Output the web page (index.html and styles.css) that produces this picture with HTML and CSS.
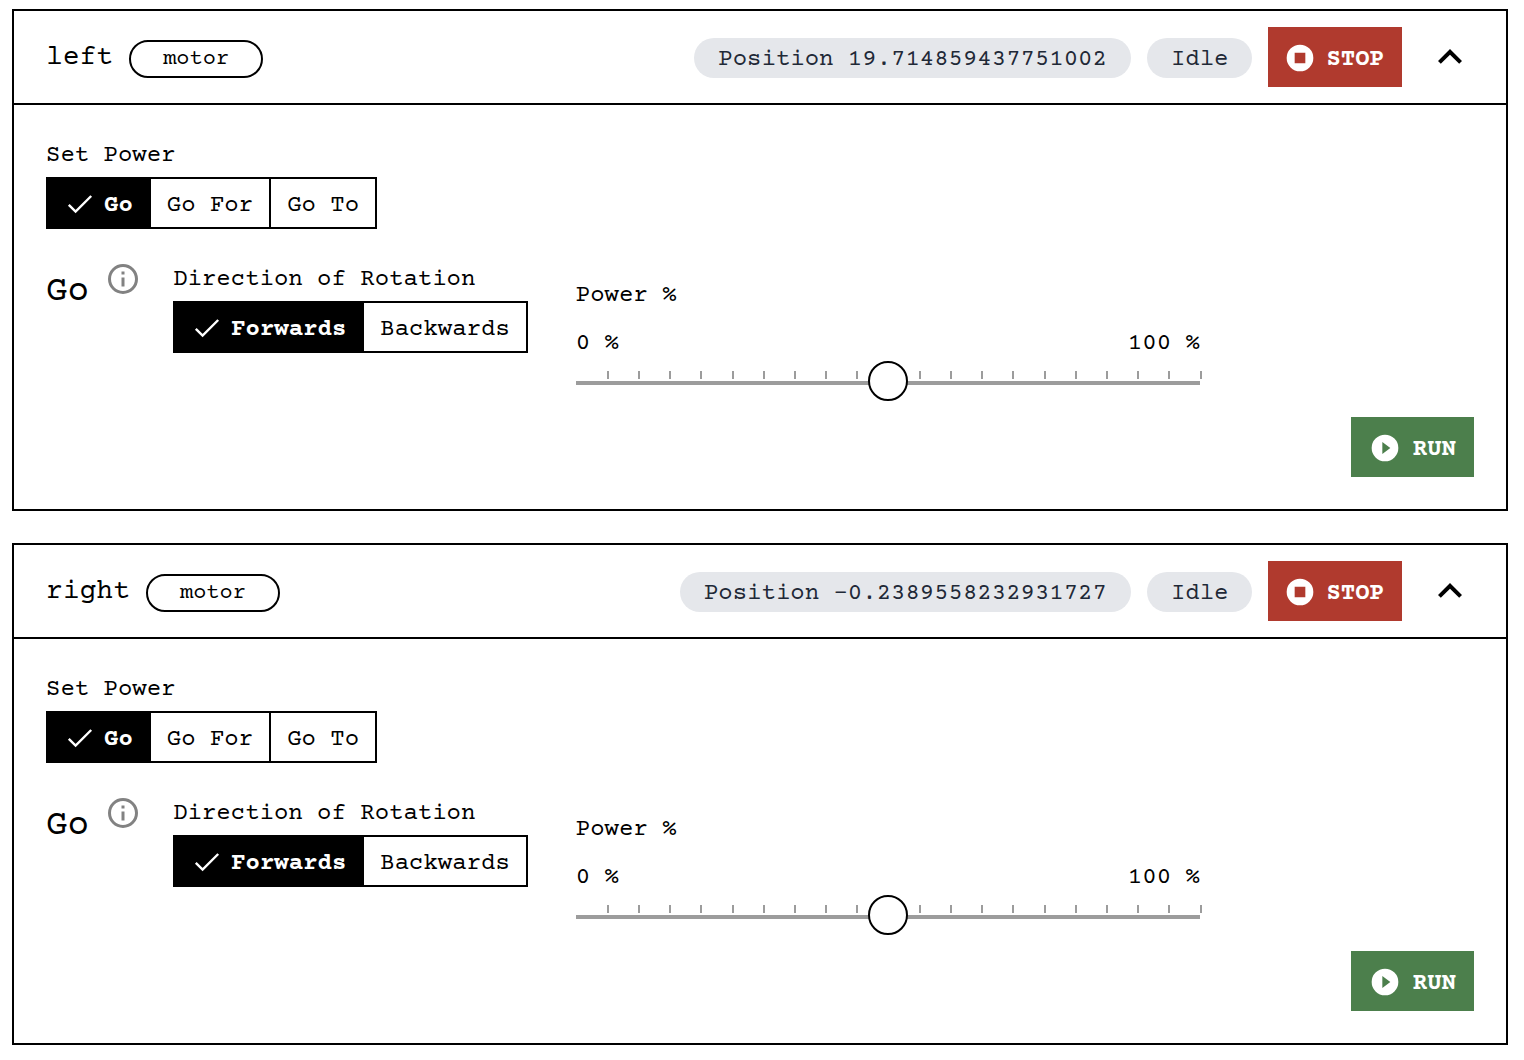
FILE: index.html
```html
<!DOCTYPE html>
<html lang="en">
<head>
<meta charset="utf-8">
<title>Motors</title>
<meta name="viewport" content="width=device-width, initial-scale=1">
<link rel="stylesheet" href="styles.css">
</head>
<body>
<svg class="defs" aria-hidden="true">
  <symbol id="check" viewBox="0 0 24 24"><path d="M3.6 12.6 8.7 17.7 20.4 6" fill="none" stroke="currentColor" stroke-width="1.8"/></symbol>
  <symbol id="stop" viewBox="0 0 24 24"><path fill="currentColor" fill-rule="evenodd" d="M12 2a10 10 0 1 0 0 20 10 10 0 0 0 0-20zM8 8h8v8H8z"/></symbol>
  <symbol id="play" viewBox="0 0 24 24"><path fill="currentColor" fill-rule="evenodd" d="M12 2a10 10 0 1 0 0 20 10 10 0 0 0 0-20zM10 16.5v-9l6 4.5z"/></symbol>
  <symbol id="info" viewBox="0 0 24 24"><path fill="currentColor" d="M11 9h2V7h-2m1 13c-4.41 0-8-3.59-8-8s3.59-8 8-8 8 3.59 8 8-3.59 8-8 8m0-18A10 10 0 0 0 2 12a10 10 0 0 0 10 10 10 10 0 0 0 10-10A10 10 0 0 0 12 2m-1 15h2v-6h-2z"/></symbol>
  <symbol id="chevron" viewBox="0 0 24 24"><path fill="currentColor" d="M7.41 15.41 12 10.83l4.59 4.58L18 14l-6-6-6 6z"/></symbol>
</svg>
<main class="page">
  <section class="panel">
    <header class="panel-header">
      <div class="name"><h2 class="title">left</h2><span class="type">motor</span></div>
      <div class="status">
        <span class="chip">Position 19.714859437751002</span>
        <span class="chip">Idle</span>
        <button class="action stop" type="button"><svg class="icon"><use href="#stop"/></svg><span class="text">STOP</span></button>
        <button class="toggle" type="button" aria-label="Collapse left"><svg class="chevron"><use href="#chevron"/></svg></button>
      </div>
    </header>
    <div class="panel-body">
      <fieldset class="choice">
        <legend class="label">Set Power</legend>
        <div class="segments">
          <label class="segment"><input type="radio" name="left-mode" checked><svg class="icon"><use href="#check"/></svg><span class="text">Go</span></label>
          <label class="segment"><input type="radio" name="left-mode"><svg class="icon"><use href="#check"/></svg><span class="text">Go For</span></label>
          <label class="segment"><input type="radio" name="left-mode"><svg class="icon"><use href="#check"/></svg><span class="text">Go To</span></label>
        </div>
      </fieldset>
      <div class="controls">
        <div class="mode"><h3 class="mode-title">Go</h3><svg class="info"><use href="#info"/></svg></div>
        <fieldset class="choice">
          <legend class="label">Direction of Rotation</legend>
          <div class="segments">
            <label class="segment"><input type="radio" name="left-direction" checked><svg class="icon"><use href="#check"/></svg><span class="text">Forwards</span></label>
            <label class="segment"><input type="radio" name="left-direction"><svg class="icon"><use href="#check"/></svg><span class="text">Backwards</span></label>
          </div>
        </fieldset>
        <div class="power">
          <label class="label" for="left-power">Power %</label>
          <div class="range-labels"><span>0 %</span><span>100 %</span></div>
          <div class="slider">
            <div class="ticks"><i></i><i></i><i></i><i></i><i></i><i></i><i></i><i></i><i></i><i></i><i></i><i></i><i></i><i></i><i></i><i></i><i></i><i></i><i></i><i></i></div>
            <input class="range" id="left-power" type="range" min="0" max="100" value="50">
          </div>
        </div>
      </div>
      <button class="action run" type="button"><svg class="icon"><use href="#play"/></svg><span class="text">RUN</span></button>
    </div>
  </section>

  <section class="panel">
    <header class="panel-header">
      <div class="name"><h2 class="title">right</h2><span class="type">motor</span></div>
      <div class="status">
        <span class="chip">Position -0.2389558232931727</span>
        <span class="chip">Idle</span>
        <button class="action stop" type="button"><svg class="icon"><use href="#stop"/></svg><span class="text">STOP</span></button>
        <button class="toggle" type="button" aria-label="Collapse right"><svg class="chevron"><use href="#chevron"/></svg></button>
      </div>
    </header>
    <div class="panel-body">
      <fieldset class="choice">
        <legend class="label">Set Power</legend>
        <div class="segments">
          <label class="segment"><input type="radio" name="right-mode" checked><svg class="icon"><use href="#check"/></svg><span class="text">Go</span></label>
          <label class="segment"><input type="radio" name="right-mode"><svg class="icon"><use href="#check"/></svg><span class="text">Go For</span></label>
          <label class="segment"><input type="radio" name="right-mode"><svg class="icon"><use href="#check"/></svg><span class="text">Go To</span></label>
        </div>
      </fieldset>
      <div class="controls">
        <div class="mode"><h3 class="mode-title">Go</h3><svg class="info"><use href="#info"/></svg></div>
        <fieldset class="choice">
          <legend class="label">Direction of Rotation</legend>
          <div class="segments">
            <label class="segment"><input type="radio" name="right-direction" checked><svg class="icon"><use href="#check"/></svg><span class="text">Forwards</span></label>
            <label class="segment"><input type="radio" name="right-direction"><svg class="icon"><use href="#check"/></svg><span class="text">Backwards</span></label>
          </div>
        </fieldset>
        <div class="power">
          <label class="label" for="right-power">Power %</label>
          <div class="range-labels"><span>0 %</span><span>100 %</span></div>
          <div class="slider">
            <div class="ticks"><i></i><i></i><i></i><i></i><i></i><i></i><i></i><i></i><i></i><i></i><i></i><i></i><i></i><i></i><i></i><i></i><i></i><i></i><i></i><i></i></div>
            <input class="range" id="right-power" type="range" min="0" max="100" value="50">
          </div>
        </div>
      </div>
      <button class="action run" type="button"><svg class="icon"><use href="#play"/></svg><span class="text">RUN</span></button>
    </div>
  </section>
</main>
</body>
</html>
```
FILE: styles.css
```css
* {
  box-sizing: border-box;
}

body {
  margin: 0;
  background: #fff;
  color: #000;
  font: 24px/32px "Courier Prime", "Liberation Mono", "Courier New", monospace;
}

.defs {
  display: none;
}

button {
  border: 0;
  font: inherit;
  cursor: pointer;
}

.page {
  display: flex;
  flex-direction: column;
  gap: 32px;
  padding: 9px 16px 15px 12px;
}

.panel {
  border: 2px solid #000;
}

.panel-header {
  display: flex;
  justify-content: space-between;
  align-items: center;
  padding: 16px 32px;
  border-bottom: 2px solid #000;
}

.name {
  display: flex;
  align-items: baseline;
  gap: 16px;
  margin-top: 4px;
}

.title {
  margin: 0;
  font-size: 28px;
  font-weight: 400;
}

.type {
  padding: 2px 32px 0;
  border: 2px solid #000;
  border-radius: 19px;
  font-size: 22px;
}

.status {
  display: flex;
  align-items: center;
  gap: 16px;
}

.chip {
  margin-top: 2px;
  padding: 6px 24px 2px;
  border-radius: 20px;
  background: #e5e7eb;
  color: #1f2937;
}

.action {
  display: flex;
  align-items: center;
  height: 60px;
  color: #fff;
  font-weight: 700;
}

.stop {
  gap: 10px;
  padding: 2px 18px 0 16px;
  background: #b03a2e;
}

.run {
  align-self: flex-end;
  gap: 12px;
  padding: 2px 18px 0;
  background: #4c7f4c;
}

.text {
  padding-top: 4px;
}

.icon {
  width: 32px;
  height: 32px;
}

.toggle {
  margin-left: 8px;
  padding: 0;
  background: none;
}

.chevron {
  display: block;
  width: 48px;
  height: 48px;
}

.panel-body {
  display: flex;
  flex-direction: column;
  padding: 32px;
}

.choice {
  min-width: 0;
  margin: 0;
  padding: 0;
  border: 0;
}

.label {
  display: block;
  padding: 3px 0 0;
}

.segments {
  display: flex;
  width: max-content;
  margin-top: 5px;
  border: 2px solid #000;
}

.segment {
  display: flex;
  align-items: center;
  gap: 8px;
  height: 48px;
  padding: 2px 16px 0;
  cursor: pointer;
}

.segment + .segment {
  border-left: 2px solid #000;
}

.segment:has(:checked) + .segment {
  border-left: 0;
}

.segment input {
  position: absolute;
  opacity: 0;
  pointer-events: none;
}

.segment .icon {
  display: none;
}

.segment:has(:checked) {
  padding-right: 18px;
  background: #000;
  color: #fff;
  font-weight: 700;
}

.segment:has(:checked) .icon {
  display: block;
}

.controls {
  display: flex;
  align-items: flex-start;
  margin-top: 32px;
}

.mode {
  display: flex;
  gap: 16px;
  margin-right: 32px;
}

.mode-title {
  margin: 0;
  font-size: 36px;
  font-weight: 400;
  line-height: 62px;
}

.info {
  width: 36px;
  height: 36px;
  color: #828282;
}

.power {
  flex: 0 1 624px;
  margin: 16px 0 16px 48px;
}

.range-labels {
  display: flex;
  justify-content: space-between;
  margin: 16px 0 4px;
}

.slider {
  display: grid;
}

.ticks,
.range {
  grid-area: 1 / 1;
}

.ticks {
  display: flex;
  justify-content: space-between;
  height: 8px;
  margin: 10px -2px 0 31px;
}

.ticks i {
  width: 2px;
  background: #9c9c9c;
}

.range {
  appearance: none;
  width: 100%;
  height: 40px;
  margin: 0;
  background: linear-gradient(#9c9c9c, #9c9c9c) 0 20px / 100% 4px no-repeat;
}

.power .range-labels {
  margin-bottom: 1px;
}

.range::-webkit-slider-thumb {
  appearance: none;
  width: 40px;
  height: 40px;
  border: 2px solid #000;
  border-radius: 50%;
  background: #fff;
}

.range::-moz-range-thumb {
  box-sizing: border-box;
  width: 40px;
  height: 40px;
  border: 2px solid #000;
  border-radius: 50%;
  background: #fff;
}
```
